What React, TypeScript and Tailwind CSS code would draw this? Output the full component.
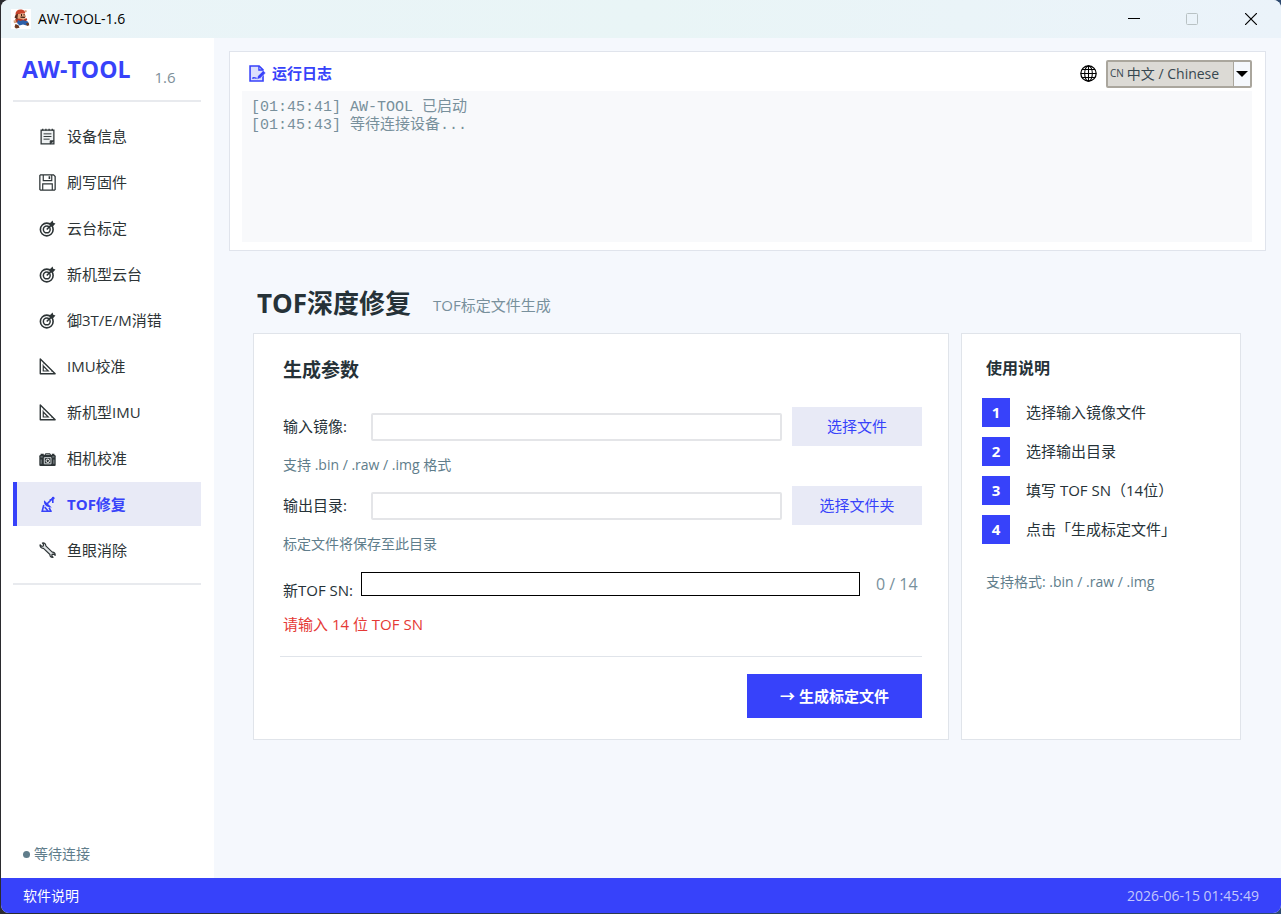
import { useState, type ReactNode } from 'react'

interface IconProps {
  className?: string
}

function Glyph({ children, className = 'size-[17px]' }: IconProps & { children: ReactNode }) {
  return (
    <svg
      viewBox="0 0 16 16"
      className={`shrink-0 ${className}`}
      fill="none"
      stroke="currentColor"
      strokeWidth="1.2"
      aria-hidden="true"
    >
      {children}
    </svg>
  )
}

function ClipboardIcon() {
  return (
    <Glyph>
      <path d="M2 2h12v13H2z" fill="#eef1f2" />
      <path d="M3.500 .6v1.800M6.500 .6v1.800M9.500 .6v1.800M12.500 .6v1.800" />
      <path d="M4.300 5.500h7.400M4.300 8h7.400M4.300 10.500h5.700" strokeWidth=".9" />
      <path d="M10.500 15v-3H14z" fill="currentColor" strokeWidth=".8" />
    </Glyph>
  )
}

function FloppyIcon() {
  return (
    <Glyph>
      <path d="M1.500 .8h12.200l1.500 1.500v12.200l-.7.7h-13l-.7-.7v-13z" />
      <path d="M4 1v5.200h8V1M3.500 15V9.300h9V15" strokeWidth="1.100" />
      <path d="M9.800 2v2.700" strokeWidth="1.500" />
    </Glyph>
  )
}

function TargetIcon() {
  return (
    <Glyph>
      <circle cx="7.300" cy="8.900" r="6" strokeWidth="1.500" />
      <circle cx="7.300" cy="8.900" r="3.200" strokeWidth="1.400" />
      <path d="M7.300 8.900L13 3.200" strokeWidth="1.500" />
      <path d="M10.200 6V3L12.800 .5l.6 2.100 2.100.6L13 6z" fill="currentColor" stroke="none" />
    </Glyph>
  )
}

function SetSquareIcon() {
  return (
    <Glyph>
      <path d="M1.200 1v13.800h14z" strokeWidth="1.300" strokeLinejoin="round" />
      <path d="M4 7.500v4.700h4.700z" strokeWidth="1.100" />
      <path d="M4.300 5.500l-.8.6M12.200 12.600l-.7.700" strokeWidth=".9" />
    </Glyph>
  )
}

function CameraIcon() {
  return (
    <Glyph>
      <rect x=".3" y="4.800" width="15.400" height="10.200" rx="1" fill="currentColor" stroke="none" />
      <path d="M1.500 4.200h3M5.500 4.600l1-1h3.500l1 1M12 4.200h2.500" />
      <path d="M5 7.200h6.300v5.800H5z" stroke="#d5dadc" strokeWidth=".9" />
      <circle cx="8.200" cy="10.200" r="1.600" stroke="#fff" strokeWidth=".9" />
      <path d="M1.500 6.500h2M12.500 6.500h2M2 9v4M14 9v4" stroke="#9aa3a7" strokeWidth=".8" />
    </Glyph>
  )
}

function SatelliteIcon() {
  return (
    <Glyph>
      <path d="M4.800 4c-.8 3.500 2 7 7.200 6.800z" fill="currentColor" stroke="none" />
      <path d="M7.500 7.500l5-5M10 3.500h3v3.200" strokeWidth="1.500" />
      <circle cx="13.300" cy="2" r="1.300" fill="currentColor" stroke="none" />
      <path d="M4.500 8.500L3 14.300h9M5.300 10.500l3.500 3.800M9.500 11l1.500 3" strokeWidth="1.500" />
    </Glyph>
  )
}

function WrenchIcon() {
  return (
    <Glyph>
      <path
        d="M1 2.600l1.700 1.500 1.300-.3.300-1.300L3.200 .9c1.800-.4 3.300.8 3.200 2.700l6.100 6c1.700-.2 3 1.200 2.700 3l-1.500-1.200-1.400.3-.2 1.400 1.200 1.300c-1.800.4-3.200-.8-3-2.600L4.200 6C2.200 6.200.7 4.600 1 2.600z"
        fill="#dfe3e5"
        strokeWidth="1.100"
        strokeLinejoin="round"
      />
    </Glyph>
  )
}

function MemoIcon() {
  return (
    <Glyph>
      <path d="M1 .9h8.500L13.200 4.600V15H1z" fill="#dcdffc" strokeWidth="1.500" />
      <path d="M9.300 1v3.700H13" />
      <path d="M13.400 5.200l2.300 2.300-5.200 5.200-3.200.9.900-3.200z" fill="currentColor" stroke="#fff" strokeWidth=".5" />
      <path d="M3.200 12.800c1.300-2 2-.3 4-.3" strokeWidth="1.400" />
    </Glyph>
  )
}

function GlobeIcon() {
  return (
    <Glyph className="size-[17px] text-black">
      <circle cx="8" cy="8" r="7.200" />
      <ellipse cx="8" cy="8" rx="3.600" ry="7.200" strokeWidth="1" />
      <path d="M8 .8v14.400M.8 8h14.400M1.800 4.300h12.400M1.800 11.700h12.400" strokeWidth="1" />
    </Glyph>
  )
}

// Little plumber in a red cap and blue overalls
function AppLogo() {
  return (
    <svg viewBox="0 0 20 20" className="size-5 shrink-0" aria-hidden="true">
      <path fill="#fff" d="M0 0h20v20H0z" />
      <path fill="#c8452c" d="M4.500 5c0-3 2.500-5 6-4.500 2.500.3 4 2 3.500 4L9.500 4.800 5 7z" />
      <path fill="#5a2d1c" d="M4.500 6l2.500-1.500 1 4-2 2-2.500-2z" />
      <path fill="#e5a77c" d="M7 5l6.500-.3 1.500 2.600-1.500 2.700-5 .6L6.500 9z" />
      <path fill="#3b2118" d="M9.500 7.500l5 .2-1 1.400-4-.4zM10 5h1v2h-1zM12.600 5h1v1.500h-1z" />
      <path fill="#b5361f" d="M4 10.500l3.500-1 5 1 3-1.500.8 2-3.800 2.500H4z" />
      <path fill="#2b5fa8" d="M7 11l2 1 3-.8 4.500 1 1.500 2.800-2.500 1.500-3.500-1-3.500 1-2.500-2.500z" />
      <path fill="#d9a37e" d="M2.500 11.500l2.500-.5.3 2.500-2.300.8zM13.500 1.500l1.800-.5.5 2-1.600.5z" />
      <path fill="#6e3a20" d="M4.500 15l3 1.200 1 2.600-3.500.7-1.500-1.500zM15 14.500l2.500-1 .8 2.800-2.300.7z" />
    </svg>
  )
}

const navItems = [
  { label: '设备信息', icon: ClipboardIcon },
  { label: '刷写固件', icon: FloppyIcon },
  { label: '云台标定', icon: TargetIcon },
  { label: '新机型云台', icon: TargetIcon },
  { label: '御3T/E/M消错', icon: TargetIcon },
  { label: 'IMU校准', icon: SetSquareIcon },
  { label: '新机型IMU', icon: SetSquareIcon },
  { label: '相机校准', icon: CameraIcon },
  { label: 'TOF修复', icon: SatelliteIcon },
  { label: '鱼眼消除', icon: WrenchIcon },
]

const steps = ['选择输入镜像文件', '选择输出目录', '填写 TOF SN（14位）', '点击「生成标定文件」']

function TitleBar() {
  return (
    <header className="flex h-[38px] shrink-0 items-center bg-linear-to-r from-[#eaf4f8] via-[#e9f5f6] to-[#ebf3fa] pl-[10px] text-black">
      <AppLogo />
      <span className="ml-[7px] text-sm">AW-TOOL-1.6</span>
      <div className="ml-auto flex h-full">
        <button aria-label="Minimize" className="flex w-[58px] items-center justify-center">
          <svg viewBox="0 0 12 12" className="size-3" stroke="currentColor">
            <path d="M0 5.500h12" />
          </svg>
        </button>
        <button aria-label="Maximize" disabled className="flex w-[58px] items-center justify-center text-[#b9c2c4]">
          <svg viewBox="0 0 12 12" className="size-3" stroke="currentColor" fill="none">
            <rect x=".5" y=".5" width="11" height="11" rx="1" />
          </svg>
        </button>
        <button aria-label="Close" className="flex w-[60px] items-center justify-center">
          <svg viewBox="0 0 12 12" className="size-3" stroke="currentColor" strokeWidth="1.200">
            <path d="M0 0l12 12M12 0L0 12" />
          </svg>
        </button>
      </div>
    </header>
  )
}

function Sidebar() {
  const [active, setActive] = useState('TOF修复')

  return (
    <aside className="flex w-[213px] shrink-0 flex-col bg-white pl-3 pr-[13px]">
      <div className="flex h-16 items-center border-b-2 border-[#e8eaee] pl-[9px]">
        <h1 className="text-[23px] font-bold text-[#3742fa]">AW-TOOL</h1>
        <span className="ml-6 pt-4 text-[15px] text-[#7d8f99]">1.6</span>
      </div>
      <nav className="mt-3 flex flex-col gap-0.5 border-b-2 border-[#e8eaee] pb-[11px]">
        {navItems.map(({ label, icon: Icon }) => (
          <button
            key={label}
            onClick={() => setActive(label)}
            className={`flex h-11 items-center gap-[11px] border-l-4 pl-[22px] text-[15px] ${
              label === active
                ? 'border-[#3742fa] bg-[#e8eaf6] font-bold text-[#3742fa]'
                : 'border-transparent text-[#2d3436]'
            }`}
          >
            <Icon />
            {label}
          </button>
        ))}
      </nav>
      <p className="mt-auto flex items-center gap-1 pb-[14px] pl-[10px] text-sm text-[#607d8b]">
        <span className="size-[7px] rounded-full bg-current" />
        等待连接
      </p>
    </aside>
  )
}

function LogPanel() {
  return (
    <section className="border border-[#e0e4ec] bg-white pb-2 pl-3 pr-[13px]">
      <div className="flex h-[39px] items-center pt-1">
        <h2 className="flex items-center gap-1.5 pl-[7px] text-[15px] font-bold text-[#3742fa]">
          <MemoIcon />
          运行日志
        </h2>
        <div className="ml-auto flex items-center gap-[9px]">
          <GlobeIcon />
          <label className="relative flex h-7 w-[146px] items-center rounded-xs border-2 border-[#aaa69d] bg-[#dcdad5] pl-0.5 text-[#37474f]">
            <span className="text-[10px]">CN</span>
            <select aria-label="Language" className="h-full min-w-0 flex-1 appearance-none bg-transparent pl-[3px] text-sm outline-none">
              <option>中文 / Chinese</option>
            </select>
            <span className="pointer-events-none absolute inset-y-0 right-0 flex w-[17px] items-center justify-center border-l border-[#aaa69d] bg-[#f5f8fd]">
              <svg viewBox="0 0 12 6" className="h-1.5 w-3">
                <path d="M0 0h12L6 6z" fill="#000" />
              </svg>
            </span>
          </label>
        </div>
      </div>
      <pre className="h-[151px] bg-[#f8f9fb] px-[9px] py-2 font-['Liberation_Mono','Noto_Sans_CJK_SC',monospace] text-[15px] leading-[18px] text-[#78909c]">
        {'[01:45:41] AW-TOOL 已启动\n[01:45:43] 等待连接设备...'}
      </pre>
    </section>
  )
}

interface PathFieldProps {
  id: string
  label: string
  action: string
  hint: string
}

function PathField({ id, label, action, hint }: PathFieldProps) {
  return (
    <>
      <div className="flex h-[39px] items-center">
        <label htmlFor={id} className="w-[91px] pl-[3px] text-[15px]">
          {label}
        </label>
        <input id={id} className="h-7 min-w-0 flex-1 rounded-xs border-2 border-[#e4e5e8] px-2 text-sm outline-none" />
        <button type="button" className="ml-[10px] h-full w-[130px] bg-[#e8eaf6] text-[15px] text-[#3742fa]">
          {action}
        </button>
      </div>
      <p className="mt-[9px] pl-[3px] text-sm leading-5 text-[#607d8b]">{hint}</p>
    </>
  )
}

function ParamsCard() {
  const [sn, setSn] = useState('')

  return (
    <form className="min-w-0 flex-1 border border-[#e0e4ea] bg-white px-[26px] pb-[21px] pt-[22px]">
      <h3 className="pl-[3px] text-[19px] font-bold leading-7">生成参数</h3>
      <div className="mt-[23px]">
        <PathField id="image" label="输入镜像:" action="选择文件" hint="支持 .bin / .raw / .img 格式" />
      </div>
      <div className="mt-[11px]">
        <PathField id="output" label="输出目录:" action="选择文件夹" hint="标定文件将保存至此目录" />
      </div>
      <div className="mt-[18px] flex h-7">
        <label htmlFor="sn" className="w-[81px] self-end whitespace-nowrap pl-[3px] text-[15px] leading-5">
          新TOF SN:
        </label>
        <input
          id="sn"
          maxLength={14}
          value={sn}
          onChange={(e) => setSn(e.target.value)}
          className="h-6 min-w-0 flex-1 border border-black px-1 text-sm outline-none"
        />
        <span className="w-[62px] whitespace-nowrap pl-4 text-base leading-6 text-[#78909c]">{sn.length} / 14</span>
      </div>
      <p className="mt-[14px] pl-[3px] text-[15px] leading-5 text-[#e53935]">请输入 14 位 TOF SN</p>
      <hr className="mt-[22px] border-[#e0e4ea]" />
      <div className="mt-[17px] flex justify-end">
        <button type="button" className="h-11 w-[175px] bg-[#3742fa] text-[15px] font-bold text-white">
          → 生成标定文件
        </button>
      </div>
    </form>
  )
}

function HelpCard() {
  return (
    <section className="w-[280px] shrink-0 border border-[#e0e4ea] bg-white px-5 pt-5">
      <h3 className="pl-1 text-base font-bold leading-7">使用说明</h3>
      <ol className="mt-4 flex flex-col gap-[10px]">
        {steps.map((step, i) => (
          <li key={step} className="flex items-center gap-4 text-[15px]">
            <span className="flex h-[29px] w-7 items-center justify-center bg-[#3742fa] font-bold text-white">{i + 1}</span>
            {step}
          </li>
        ))}
      </ol>
      <p className="mt-7 pl-1 text-sm leading-5 text-[#607d8b]">支持格式: .bin / .raw / .img</p>
    </section>
  )
}

export default function App() {
  return (
    <div className="bg-linear-to-r from-[#2b2b2f] to-[#2d4a70] pb-px pl-px font-['Open_Sans','Noto_Sans_CJK_SC',sans-serif] text-[#263238]">
      <div className="flex min-h-[calc(100vh-1px)] flex-col overflow-hidden rounded-lg bg-[#f5f8fd]">
        <TitleBar />
        <div className="flex flex-1">
          <Sidebar />
          <main className="min-w-0 flex-1 pl-[15px] pr-[15px] pt-[13px]">
            <LogPanel />
            <div className="pl-6 pr-[25px]">
              <div className="flex h-[82px] items-center gap-[22px] pl-1 pt-[22px]">
                <h2 className="text-[26px] font-bold">TOF深度修复</h2>
                <p className="pt-1 text-[15px] text-[#78909c]">TOF标定文件生成</p>
              </div>
              <div className="flex gap-3">
                <ParamsCard />
                <HelpCard />
              </div>
            </div>
          </main>
        </div>
        <footer className="flex h-[35px] shrink-0 items-center justify-between bg-[#3742fa] px-[22px] text-white">
          <a href="#about" className="text-sm">软件说明</a>
          <time className="text-sm text-[#c3c7fd]">2026-06-15 01:45:49</time>
        </footer>
      </div>
    </div>
  )
}
